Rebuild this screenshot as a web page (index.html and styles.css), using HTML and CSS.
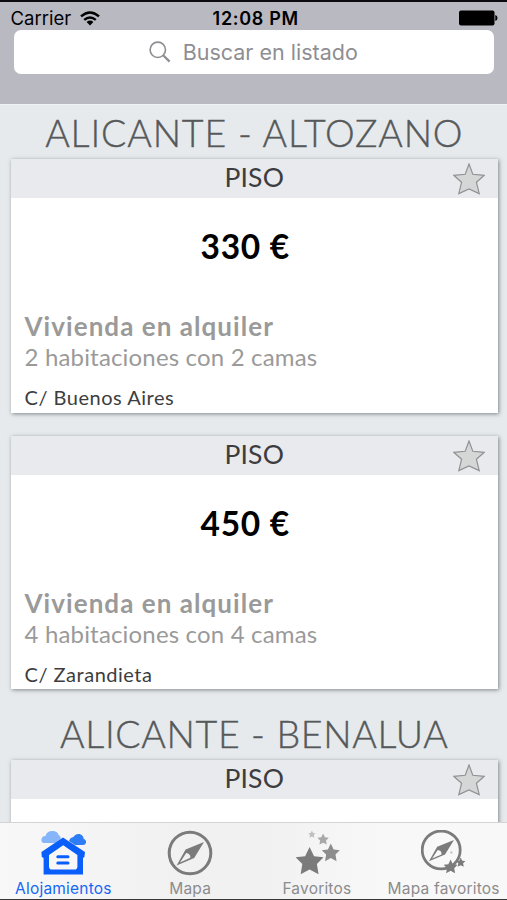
FILE: index.html
```
<!DOCTYPE html>
<html lang="es">
<head>
  <meta charset="UTF-8">
  <meta name="viewport" content="width=device-width, initial-scale=1.0">
  <title>Alojamientos</title>
  <link rel="stylesheet" href="styles.css">
</head>
<body>
  <!-- shared icons -->
  <svg class="defs" width="0" height="0">
    <symbol id="star" viewBox="0 0 32 32">
      <path d="M16 1 L19.8 11.3 L31.2 12.3 L23.4 19.2 L26.2 30.6 L16 26 L5.8 30.6 L8.6 19.2 L0.8 12.3 L12.2 11.3 Z"/>
    </symbol>
    <symbol id="solid-star" viewBox="0 0 20 20">
      <path d="M10 0 L13.2 6.6 L20 7.3 L15.2 12.2 L16.4 19.5 L10 16.1 L3.6 19.5 L4.8 12.2 L0 7.3 L6.8 6.6 Z"/>
    </symbol>
    <symbol id="compass" viewBox="0 0 46 46">
      <circle cx="23" cy="23" r="20.8" fill="none" stroke="currentColor" stroke-width="3"/>
      <path fill="currentColor" fill-rule="evenodd" d="M37 12 L27.2 28 L9.6 35.4 L18.6 19.4 Z M19.2 23 L13 32.4 L23.4 27.8 Q23.6 23.6 19.2 23 Z"/>
    </symbol>
  </svg>

  <div class="screen">
    <header class="header">
      <div class="status-bar">
        <div class="carrier">
          <span>Carrier</span>
          <svg width="20" height="15" viewBox="0 0 20 15">
            <g fill="none" stroke="#000" stroke-width="2.4">
              <path d="M1 5.4 Q10 -2.4 19 5.4"/>
              <path d="M4.2 8.9 Q10 3.9 15.8 8.9"/>
            </g>
            <path d="M10 14.4 L6.6 11 Q10 8.2 13.4 11 Z"/>
          </svg>
        </div>
        <span class="time">12:08 PM</span>
        <div class="battery">
          <svg width="39" height="16" viewBox="0 0 39 16">
            <rect x="0" y="0.5" width="35.5" height="15" rx="2"/>
            <path d="M36.3 5 Q38.5 5.6 38.5 8 Q38.5 10.4 36.3 11 Z"/>
          </svg>
        </div>
      </div>
      <div class="search">
        <svg width="22" height="22" viewBox="0 0 22 22" fill="none" stroke="#8e8e93">
          <circle cx="8.8" cy="8.8" r="7.7" stroke-width="1.6"/>
          <path d="M14.2 14.2 L20.6 20.6" stroke-width="2.3"/>
        </svg>
        <span class="search-text">Buscar en listado</span>
      </div>
    </header>

    <main class="list">
      <section class="zone">
        <h2 class="altozano">ALICANTE - ALTOZANO</h2>
        <article class="card">
          <div class="card-header">
            <h3>PISO</h3>
            <svg class="fav" width="32" height="32"><use href="#star"/></svg>
          </div>
          <div class="card-body">
            <p class="price">330 €</p>
            <p class="type">Vivienda en alquiler</p>
            <p class="rooms">2 habitaciones con 2 camas</p>
            <p class="address">C/ Buenos Aires</p>
          </div>
        </article>
        <article class="card">
          <div class="card-header">
            <h3>PISO</h3>
            <svg class="fav" width="32" height="32"><use href="#star"/></svg>
          </div>
          <div class="card-body">
            <p class="price">450 €</p>
            <p class="type">Vivienda en alquiler</p>
            <p class="rooms">4 habitaciones con 4 camas</p>
            <p class="address">C/ Zarandieta</p>
          </div>
        </article>
      </section>

      <section class="zone">
        <h2 class="benalua">ALICANTE - BENALUA</h2>
        <article class="card">
          <div class="card-header">
            <h3>PISO</h3>
            <svg class="fav" width="32" height="32"><use href="#star"/></svg>
          </div>
          <div class="card-body"></div>
        </article>
      </section>
    </main>

    <nav class="tab-bar">
      <a class="tab active">
        <svg width="46" height="46" viewBox="0 0 46 46">
          <path fill="#86b5fa" d="M4 13 Q0 13 0.4 9.4 Q1 6 4.4 6 Q6 0.8 11.5 1 Q16.6 1.2 17.6 5 Q20 6 19.6 9 L14 13 Z"/>
          <path fill="#2f7df6" d="M28 11 Q29 7.4 32.4 7 Q34.6 3.4 38.6 4 Q42.4 5 42.6 8.8 Q45.4 10 45 12.8 Q44.4 15 42 15 L34 15 Z"/>
          <path fill="#0a5ffb" d="M22 7.6 L44 22 L43.4 27 L42 28 V44.5 H2.6 V28 L0.8 27 L0.4 22 Z"/>
          <path fill="#f7f7f7" d="M22.2 15.2 L36.4 25 V36.5 Q36.4 39.6 33.4 39.6 H11 Q8 39.6 8 36.5 V25 Z"/>
          <path stroke="#0a5ffb" stroke-width="3" stroke-linecap="round" d="M16.8 26.8 H27 M16.8 33 H27"/>
        </svg>
        <span>Alojamientos</span>
      </a>
      <a class="tab">
        <svg width="46" height="46"><use href="#compass"/></svg>
        <span>Mapa</span>
      </a>
      <a class="tab">
        <svg width="46" height="46" viewBox="0 0 46 46" fill="currentColor">
          <use href="#solid-star" x="1.6" y="17" width="28" height="28"/>
          <use href="#solid-star" x="27.5" y="13.6" width="18.6" height="18" opacity=".85"/>
          <use href="#solid-star" x="23.4" y="3.4" width="11.4" height="11.6" opacity=".62"/>
          <use href="#solid-star" x="14.2" y="0.6" width="7.4" height="7.4" opacity=".42"/>
        </svg>
        <span>Favoritos</span>
      </a>
      <a class="tab">
        <svg width="46" height="46" viewBox="0 0 46 46" fill="currentColor">
          <use href="#compass" x="-0.8" y="-1" width="42" height="42"/>
          <use href="#solid-star" x="22.6" y="29.6" width="14" height="14"/>
          <use href="#solid-star" x="35" y="27.6" width="9.4" height="9.4"/>
          <circle cx="30.4" cy="22.4" r="1.2" opacity=".4"/>
        </svg>
        <span>Mapa favoritos</span>
      </a>
    </nav>
  </div>
</body>
</html>
```
FILE: styles.css
```
* {
  box-sizing: border-box;
}

body {
  margin: 0;
  background-color: #e6eaed;
  font-family: Lato, "Open Sans", sans-serif;
}

h2, h3, p {
  margin: 0;
}

.defs {
  display: block;
}

.screen {
  height: 900px;
  display: flex;
  flex-direction: column;
  overflow: hidden;
}

/* Header */
.header {
  flex: none;
  height: 104px;
  padding: 4px 13px 0 10.5px;
  background-color: #b9b9c2;
  border-top: 2px solid #0b0a10;
  font-family: Inter, "Liberation Sans", sans-serif;
}

.status-bar {
  display: grid;
  grid-template-columns: 1fr auto 1fr;
  align-items: center;
  height: 24px;
  color: #000;
}

.carrier {
  display: flex;
  align-items: center;
  gap: 9px;
  font-size: 18.5px;
  line-height: 23px;
}

.time {
  padding-left: 7px;
  font-size: 18px;
  font-weight: 600;
  line-height: 23px;
  letter-spacing: 0.7px;
}

.battery {
  display: flex;
  justify-content: flex-end;
  margin-right: -4px;
}

.search {
  display: flex;
  align-items: center;
  justify-content: center;
  gap: 12px;
  height: 44px;
  margin-left: 3px;
  padding-right: 1px;
  background-color: #fff;
  border-radius: 7px;
  color: #8e8e93;
  font-size: 21.5px;
}

.search-text {
  margin-top: -1px;
}

/* Listing */
.list {
  flex: 1;
  min-height: 0;
  overflow: hidden;
  padding: 0 9px 0 10.5px;
  border-top: 1px solid #eff1f3;
}

.zone + .zone {
  padding-top: 17px;
}

.zone h2 {
  height: 54px;
  line-height: 56px;
  font-size: 37.5px;
  font-weight: 300;
  text-align: center;
  white-space: nowrap;
  color: #56595a;
  -webkit-text-stroke: 0.4px #56595a;
}

.zone .altozano {
  letter-spacing: 0.85px;
}

.zone .benalua {
  letter-spacing: 0.65px;
}

.card {
  background-color: #fff;
  box-shadow: 1px 1px 4px rgba(70, 80, 84, 0.65);
}

.card + .card {
  margin-top: 23px;
}

.card-header {
  display: grid;
  grid-template-columns: 1fr auto 1fr;
  align-items: start;
  height: 39px;
  background-color: #e9eaed;
}

.card-header h3 {
  grid-column: 2;
  font-size: 26.5px;
  font-weight: 400;
  line-height: 37px;
  letter-spacing: 0.2px;
  color: #3d3d40;
}

.fav {
  justify-self: end;
  margin: 4px 13.5px 0 0;
  fill: #d5d7d7;
  stroke: #909394;
  stroke-width: 1.2;
}

.card-body {
  height: 214.5px;
  padding: 0 14px;
  white-space: nowrap;
}

.price {
  padding-right: 18px;
  line-height: 96px;
  font-size: 33.5px;
  font-weight: 700;
  letter-spacing: 0.7px;
  text-align: center;
  color: #000;
}

.type {
  margin-top: 16px;
  font-size: 26px;
  font-weight: 700;
  line-height: 32px;
  letter-spacing: 1.05px;
  color: #9a9a9a;
}

.rooms {
  font-size: 24px;
  line-height: 30px;
  letter-spacing: 0.17px;
  color: #9a9a9a;
}

.address {
  margin-top: 13px;
  font-size: 20px;
  line-height: 24px;
  letter-spacing: 0.52px;
  color: #3d3d3f;
}

/* Tab bar */
.tab-bar {
  flex: none;
  display: grid;
  grid-template-columns: repeat(4, 1fr);
  height: 78.5px;
  background: linear-gradient(90deg, #f8f8f8, #f1f1f2 35%, #f1f1f2 52%, #f8f8f8 75%);
  border-top: 1px solid #d2d4d5;
  border-bottom: 1.5px solid #38383a;
}

.tab {
  display: flex;
  flex-direction: column;
  align-items: center;
  padding-top: 7px;
  color: #7b7b7c;
  font-family: Inter, "Liberation Sans", sans-serif;
  font-size: 15.5px;
  line-height: 20px;
  letter-spacing: 0.2px;
  white-space: nowrap;
}

.tab svg {
  margin-bottom: 3px;
}

.tab span {
  color: #8c8c8d;
}

.tab.active svg {
  margin-left: 2px;
}

.tab.active span {
  color: #1468f5;
}
```
